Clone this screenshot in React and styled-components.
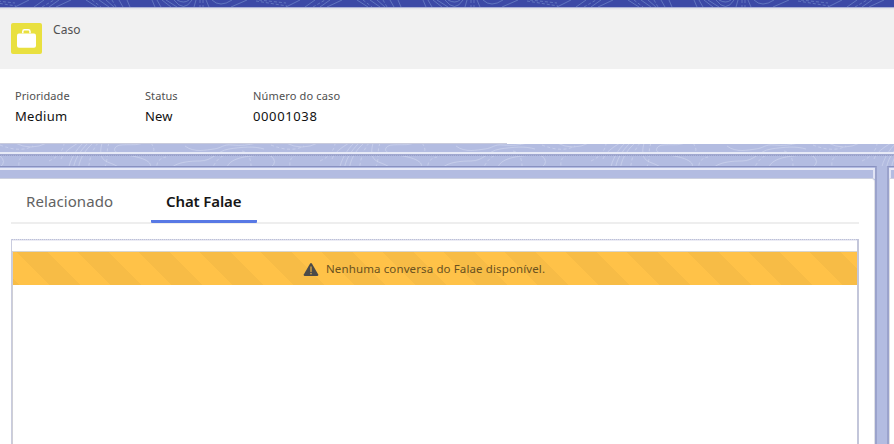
import React from "react";
import styled, { createGlobalStyle } from "styled-components";

const GlobalStyle = createGlobalStyle`
  * { box-sizing: border-box; }
  body { margin: 0; background: #b3bce1; overflow: hidden; }
`;

const Page = styled.main`
  display: flex;
  flex-direction: column;
  width: 894px;
  height: 444px;
  overflow: hidden;
  background: #b3bce1;
  font-family: "Noto Sans", "Open Sans", sans-serif;
`;

const Pattern = styled.svg`
  display: block;
  width: 100%;
  height: 100%;
  fill: none;
`;

const TopBand = styled.div`
  height: 7px;
  flex: none;
  background: #3c49a6;
`;

const RecordHeader = styled.header`
  height: 62px;
  flex: none;
  display: flex;
  gap: 11px;
  padding: 14px 11px 0;
  border-top: 1px solid #a9afd5;
  background: linear-gradient(#dcdde6, #f1f1f1 2px);
`;

const CaseIcon = styled.span`
  width: 31px;
  height: 31px;
  margin-top: 1px;
  border-radius: 2px;
  background: #e9e03f;
  svg { display: block; }
`;

const Label = styled.span`
  display: block;
  width: max-content;
  color: #505050;
  font-size: ${(p) => p.$size || 11}px;
  line-height: 16px;
  letter-spacing: ${(p) => p.$spacing || 0}px;
`;

const Fields = styled.section`
  height: 74px;
  flex: none;
  display: grid;
  grid-template-columns: 130px 108px auto;
  padding: 19px 15px 0;
  background: #fff;
`;

const Value = styled.span`
  display: block;
  width: max-content;
  margin-top: 3px;
  color: #111;
  font-size: 13px;
  line-height: 18px;
  letter-spacing: ${(p) => p.$spacing || 0}px;
`;

const Backdrop = styled.div`
  height: 23px;
  flex: none;
  display: grid;
  grid-template: 23px / 1fr;
  > * { grid-area: 1 / 1; }
`;

const Rules = styled.div`
  display: flex;
  flex-direction: column;
  justify-content: space-between;
`;

const EdgeLine = styled.div`
  width: 507px;
  height: 1px;
  background: #c9cbdc;
  box-shadow: 507px 0 #fff;
`;

const GlowLine = styled.div`
  height: 4px;
  margin-bottom: 10px;
  background:
    repeating-linear-gradient(90deg, #979fc9 0 1px, #aab2d8 1px 2px) 0 3px / 100% 1px no-repeat,
    linear-gradient(#e7eaf7 0 2px, #a0a8d0 2px 3px, transparent 3px);
`;

const Workspace = styled.div`
  flex: 1;
  display: grid;
  grid-template-columns: 877px 10px 7px;
  min-height: 0;
`;

const Panel = styled.section`
  display: flex;
  flex-direction: column;
  padding-top: 1px;
  border-top: 1px solid #8991c1;
  border-${(p) => p.$edge}: 2px solid #9ba3cc;
  background: #b3bce1;
`;

const PanelCap = styled.div`
  height: 11px;
  flex: none;
  border-top: 2px solid #e7e9f7;
  border-${(p) => p.$edge}: 2px solid #e1e4f5;
  border-bottom: 1px solid #ccd0df;
`;

const PanelBody = styled.div`
  flex: 1;
  display: flex;
  flex-direction: column;
  padding-left: ${(p) => (p.$main ? 11 : 0)}px;
  padding-right: ${(p) => (p.$main ? 15 : 0)}px;
  border-${(p) => p.$edge}: 1px solid #dedfe5;
  border-top-right-radius: ${(p) => (p.$main ? 3 : 0)}px;
  background: #fff;
`;

const Tabs = styled.nav`
  display: flex;
  height: 45px;
  flex: none;
  border-bottom: 2px solid #eeeeee;
`;

const Tab = styled.span`
  height: 44px;
  width: ${(p) => p.$width}px;
  padding: 11px 0 0 15px;
  margin-right: 23px;
  border-bottom: ${(p) => (p.$active ? "3px solid #5879e5" : "0")};
  border-radius: 1px;
  color: ${(p) => (p.$active ? "#161616" : "#626262")};
  font-size: 15px;
  font-weight: ${(p) => (p.$active ? 600 : 400)};
  line-height: 22px;
  letter-spacing: ${(p) => p.$spacing || 0}px;
  white-space: nowrap;
`;

const Frame = styled.div`
  flex: 1;
  display: flex;
  flex-direction: column;
  margin-top: 15px;
  padding-top: 12px;
  border-left: 1px solid #c9ccdf;
  border-right: 2px solid #c3c6da;
  background:
    linear-gradient(#ececf5, #ececf5) 0 1px / 100% 1px no-repeat,
    repeating-linear-gradient(90deg, #bcc0d9 0 1px, #d9dbe9 1px 2px) 0 0 / 100% 1px no-repeat;
`;

const FrameBody = styled.div`
  flex: 1;
  border-top: 1px solid #d7d5cf;
  border-left: 1px solid #cfcfd5;
`;

const Warning = styled.div`
  height: 33px;
  display: flex;
  align-items: center;
  padding: 1px 0 0 290px;
  gap: 7px;
  color: #69511f;
  background: linear-gradient(
      45deg,
      rgba(0, 0, 0, 0.03) 25%, transparent 25%, transparent 50%,
      rgba(0, 0, 0, 0.03) 50%, rgba(0, 0, 0, 0.03) 75%, transparent 75%
    ) 4px 0 / 61px 61px #ffc248;
`;

const WarningText = styled.span`
  font-size: 11.5px;
  line-height: 16px;
  white-space: nowrap;
  letter-spacing: ${(p) => p.$spacing || 0}px;
`;

const HeaderContours = () => (
  <Pattern>
    <defs>
      <pattern id="header-contours" x="29" width="271" height="7" patternUnits="userSpaceOnUse">
        <g stroke="#7f9bd4" strokeWidth=".6" opacity=".85">
          <path d="M5 7 15 0M20 7 30 0M27 7 42 0M57 0l11 7M70 0l10 7M77 0l8 7M90 0l4 7M98 0l3 7M123 0l3 7M128 0l4 7M133 0l9 7M137 0l11 7M145 0q10 13 18 0M148 0q7 4 12 0M167 0l-2 7M177 0l3 7M183 0q8 8 20 0M202 7 218 0M257 7l14-7" />
          <path d="M13 7 25 0M63 0l9 7M83 0l4 7M171 0v7M174 0v7M227 1l31 5M230 0l27 3" strokeDasharray="3 2" />
        </g>
      </pattern>
    </defs>
    <rect width="894" height="7" fill="url(#header-contours)" />
  </Pattern>
);

const BodyContours = () => (
  <Pattern>
    <defs>
      <pattern id="body-contours" width="271" height="29" patternUnits="userSpaceOnUse">
        <g stroke="#d9def3" strokeWidth=".65" opacity=".75">
          <path d="M83 0C76 7 70 16 68 28M88 0C80 8 74 17 73 28M93 0C84 8 79 17 78 28M102 0C99 12 101 17 110 20S122 29 140 27 150 17 137 14 112 11 115 5 134 4 143 0M78 0C70 5 64 9 61 16M15 0q16 8 32 0M185 3C194 10 206 7 214 6S223 1 232 2 249 2 256 0M170 28C172 20 187 18 200 18S216 8 229 6 254 3 264 6M227 28C225 18 240 14 251 13 269 11 275 12 274 19S266 28 262 28M0 13q7 6 0 11" />
          <path d="M98 0C91 9 90 15 88 28M109 0C105 10 110 15 103 28M0 2q20 8 33 1M20 28Q16 14 26 12M49 18Q62 12 64 1M151 0q7 10-3 12M157 28Q155 16 166 14M212 28q2-11 14-17M242 8q10 2 9 20" strokeDasharray="3 2.5" />
        </g>
      </pattern>
    </defs>
    <rect width="894" height="23" fill="url(#body-contours)" />
  </Pattern>
);

const Briefcase = () => (
  <svg width="31" height="31" viewBox="0 0 31 31">
    <path d="M11.8 10.2V8.5q0-1.7 1.7-1.7h3.8q1.7 0 1.7 1.7v1.7" fill="none" stroke="#fff" strokeWidth="1.5" />
    <rect x="6" y="10.5" width="19" height="14.3" rx="2" fill="#fff" />
  </svg>
);

const WarningIcon = () => (
  <svg width="16" height="15" viewBox="0 0 16 15">
    <path d="M7.1 1.5Q8 .4 8.9 1.5l6.2 10.8Q15.7 14 14.4 14H1.6Q.3 14 .9 12.3Z" fill="#4c4b49" />
    <path d="M8 5v4.4" stroke="#d4a444" strokeWidth="1.4" strokeLinecap="round" />
    <circle cx="8" cy="11.6" r=".85" fill="#d4a444" />
  </svg>
);

export default function App() {
  return (
    <Page>
      <GlobalStyle />
      <TopBand><HeaderContours /></TopBand>
      <RecordHeader>
        <CaseIcon><Briefcase /></CaseIcon>
        <Label $size={12} $spacing={0.1}>Caso</Label>
      </RecordHeader>
      <Fields>
        <div><Label $spacing={0.07}>Prioridade</Label><Value $spacing={0.3}>Medium</Value></div>
        <div><Label $spacing={0.07}>Status</Label><Value $spacing={0.2}>New</Value></div>
        <div><Label $spacing={0.15}>Número do caso</Label><Value $spacing={0.62}>00001038</Value></div>
      </Fields>
      <Backdrop>
        <BodyContours />
        <Rules><EdgeLine /><GlowLine /></Rules>
      </Backdrop>
      <Workspace>
        <Panel $edge="right">
          <PanelCap $edge="right" />
          <PanelBody $edge="right" $main>
            <Tabs>
              <Tab $width={117} $spacing={0.08}>Relacionado</Tab>
              <Tab $width={106} $spacing={-0.12} $active>Chat Falae</Tab>
            </Tabs>
            <Frame>
              <FrameBody>
                <Warning>
                  <WarningIcon />
                  <WarningText $spacing={0.12}>Nenhuma conversa do Falae disponível.</WarningText>
                </Warning>
              </FrameBody>
            </Frame>
          </PanelBody>
        </Panel>
        <div />
        <Panel $edge="left">
          <PanelCap $edge="left" />
          <PanelBody $edge="left" />
        </Panel>
      </Workspace>
    </Page>
  );
}
